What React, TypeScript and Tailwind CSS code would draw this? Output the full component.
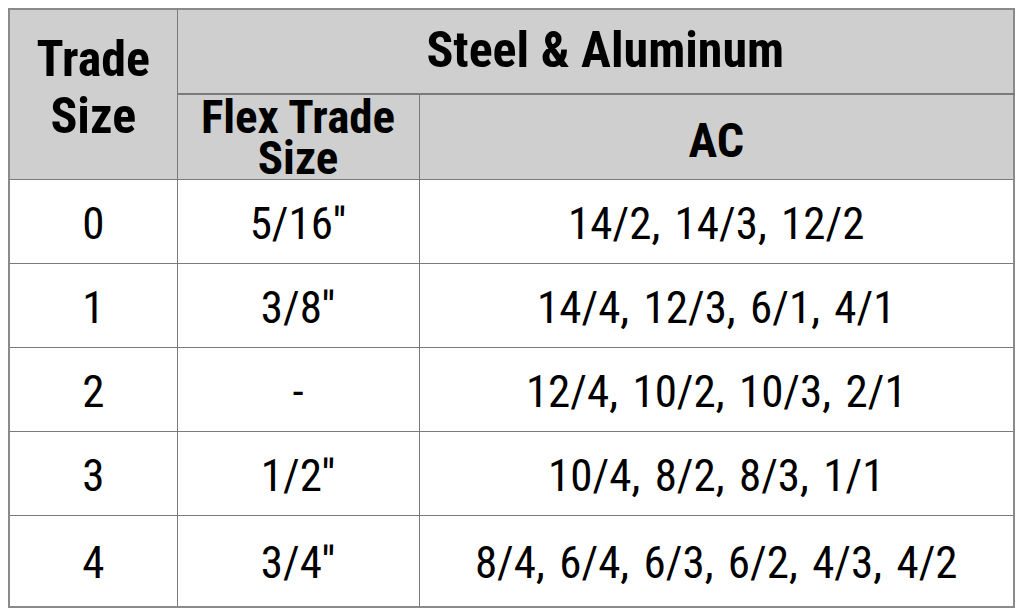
const rows = [
  { size: "0", flex: "5/16''", ac: "14/2, 14/3, 12/2" },
  { size: "1", flex: "3/8''", ac: "14/4, 12/3, 6/1, 4/1" },
  { size: "2", flex: "-", ac: "12/4, 10/2, 10/3, 2/1" },
  { size: "3", flex: "1/2''", ac: "10/4, 8/2, 8/3, 1/1" },
  { size: "4", flex: "3/4''", ac: "8/4, 6/4, 6/3, 6/2, 4/3, 4/2" },
];

const font = { fontFamily: '"Liberation Sans Narrow", "Roboto Condensed", "Liberation Sans", sans-serif' };

export default function App() {
  return (
    <div className="w-[1024px] h-[616px] bg-white pl-2 pt-2" style={font}>
      <table className="w-[1007px] border-collapse border-2 border-[#8a8a8a] text-black">
        <thead>
          <tr className="h-[85px] bg-[#cfcfcf]">
            <th rowSpan={2} className="w-[168px] border border-[#7a7a7a] text-[50px] font-bold leading-[57px] pb-3">
              Trade
              <br />
              Size
            </th>
            <th colSpan={2} className="border border-b-2 border-[#7a7a7a] text-[50px] font-bold leading-none pl-5 pb-1">
              Steel &amp; Aluminum
            </th>
          </tr>
          <tr className="h-[85px] bg-[#cfcfcf]">
            <th className="w-[242px] border border-[#7a7a7a] text-[47px] font-bold leading-[41px]">
              Flex Trade
              <br />
              Size
            </th>
            <th className="border border-[#7a7a7a] text-[48px] font-bold leading-none pt-2">AC</th>
          </tr>
        </thead>
        <tbody>
          {rows.map((r, i) => (
            <tr key={r.size} className={i === rows.length - 1 ? "h-[92px]" : "h-[84px]"}>
              <td className="border border-[#7a7a7a] text-center text-[45px] leading-none pt-1">{r.size}</td>
              <td className="border border-[#7a7a7a] text-center text-[45px] leading-none pt-1">{r.flex}</td>
              <td className="border border-[#7a7a7a] text-center text-[45px] leading-none pt-1 [word-spacing:4px]">{r.ac}</td>
            </tr>
          ))}
        </tbody>
      </table>
    </div>
  );
}
